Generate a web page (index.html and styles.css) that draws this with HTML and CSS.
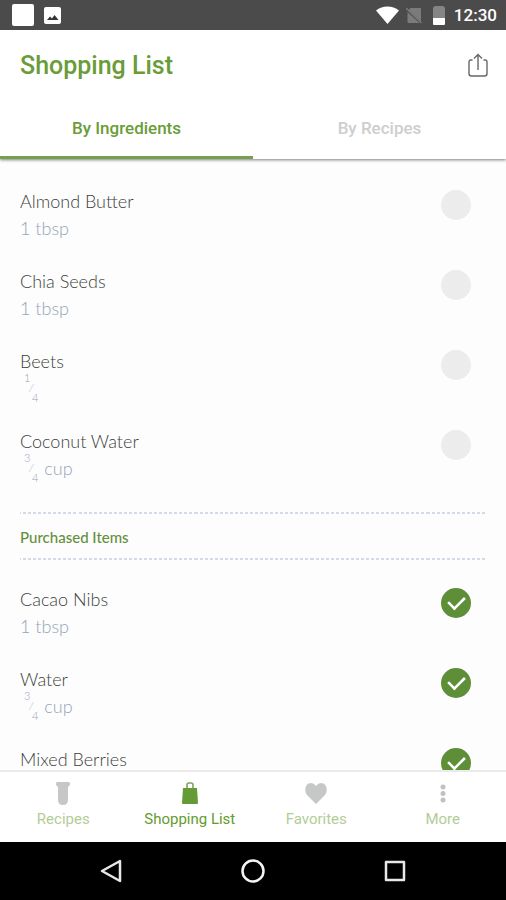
FILE: index.html
```html
<!DOCTYPE html>
<html lang="en">
<head>
<meta charset="utf-8">
<meta name="viewport" content="width=device-width, initial-scale=1">
<title>Shopping List</title>
<link rel="stylesheet" href="styles.css">
</head>
<body>
<div class="status">
  <svg class="status-app" width="22" height="22" viewBox="0 0 22 22" aria-hidden="true"><rect width="22" height="22" rx="2" fill="#fff"/></svg>
  <svg width="17" height="17" viewBox="0 0 17 17" aria-hidden="true"><rect width="17" height="17" rx="2" fill="#fff"/><path d="M3 13l3-3.500 2 2 2.500-3.500 4 5z" fill="#333"/></svg>
  <span class="spacer"></span>
  <svg width="23" height="18" viewBox="0 0 23 18" aria-hidden="true"><path d="M0 4.500C6.500-1 16.500-1 23 4.500L11.500 18z" fill="#fff"/></svg>
  <svg class="status-sim" width="16" height="17" viewBox="0 0 16 17" aria-hidden="true"><path d="M4.500 1H14q1 0 1 1v12.500L2.500 3zM1.500 5L13.500 16H2.500q-1 0-1-1z" fill="#7b7b7b"/><path d="M0 1l15.500 15" stroke="#7b7b7b" stroke-width="1.400"/></svg>
  <svg width="12" height="19" viewBox="0 0 12 19" aria-hidden="true"><path d="M3 0h6q3 0 3 3v9H0V3q0-3 3-3z" fill="#858585"/><path d="M0 12h12v6q0 1-1 1H1q-1 0-1-1z" fill="#fff"/></svg>
  <time class="clock">12:30</time>
</div>
<header class="header">
  <h1 class="title">Shopping List</h1>
  <button class="share" type="button" aria-label="Share">
    <svg width="20" height="24" viewBox="0 0 20 24" fill="none" stroke="#686868" stroke-width="1.400" aria-hidden="true"><path d="M4.500 7H3Q1 7 1 9v11.500q0 2.500 2.500 2.500h13q2.500 0 2.500-2.500V9q0-2-2-2h-1.500M10 17V1.500M6 5.500l4-4 4 4"/></svg>
  </button>
</header>
<nav class="tabs" aria-label="Group by">
  <button class="tab tab-active" type="button">By Ingredients</button>
  <button class="tab" type="button">By Recipes</button>
</nav>
<main class="content">
  <div class="items">
    <label class="item"><span class="text"><span class="name">Almond Butter</span><span class="qty">1 tbsp</span></span><input class="check" type="checkbox"></label>
    <label class="item"><span class="text"><span class="name">Chia Seeds</span><span class="qty">1 tbsp</span></span><input class="check" type="checkbox"></label>
    <label class="item"><span class="text"><span class="name">Beets</span><span class="qty"><span class="frac"><span>1</span><span>⁄</span><span>4</span></span></span></span><input class="check" type="checkbox"></label>
    <label class="item"><span class="text"><span class="name">Coconut Water</span><span class="qty"><span class="frac"><span>3</span><span>⁄</span><span>4</span></span>cup</span></span><input class="check" type="checkbox"></label>
  </div>
  <h2 class="purchased">Purchased Items</h2>
  <div class="items">
    <label class="item"><span class="text"><span class="name">Cacao Nibs</span><span class="qty">1 tbsp</span></span><input class="check" type="checkbox" checked></label>
    <label class="item"><span class="text"><span class="name">Water</span><span class="qty"><span class="frac"><span>3</span><span>⁄</span><span>4</span></span>cup</span></span><input class="check" type="checkbox" checked></label>
    <label class="item"><span class="text"><span class="name">Mixed Berries</span></span><input class="check" type="checkbox" checked></label>
  </div>
</main>
<nav class="bottom" aria-label="Main">
  <a class="link" href="#recipes"><svg width="24" height="24" viewBox="0 0 24 24" fill="#c6c8c7" aria-hidden="true"><path d="M6 0h12q1 0 1 2t-1 2l-1 1v13q0 5-5 5t-5-5V5L6 4Q5 4 5 2t1-2z"/></svg>Recipes</a>
  <a class="link link-active" href="#shopping"><svg width="24" height="24" viewBox="0 0 24 24" aria-hidden="true"><path d="M9 7V3q0-2 2-2h2q2 0 2 2v4" fill="none" stroke="#80a35b" stroke-width="1.600"/><path d="M5 6h14l1 15q0 1-1 1H5q-1 0-1-1z" fill="#649b37"/></svg>Shopping List</a>
  <a class="link" href="#favorites"><svg width="24" height="24" viewBox="0 0 24 24" fill="#c6c8c7" aria-hidden="true"><path d="M12 22L3.500 13.500C-.5 9.500 1 1 7 1q3 0 5 3 2-3 5-3c6 0 7.500 8.500 3.500 12.500z"/></svg>Favorites</a>
  <a class="link" href="#more"><svg width="24" height="24" viewBox="0 0 24 24" fill="#c0c2c1" aria-hidden="true"><circle cx="12" cy="5" r="2.500"/><circle cx="12" cy="11.500" r="2.500"/><circle cx="12" cy="18" r="2.500"/></svg>More</a>
</nav>
<div class="system">
  <button class="key" type="button" aria-label="Back"><svg width="24" height="24" viewBox="0 0 24 24" fill="none" stroke="#e8e8e8" stroke-width="2.500" stroke-linejoin="round" aria-hidden="true"><path d="M21 2v20L3 12z"/></svg></button>
  <button class="key" type="button" aria-label="Home"><svg width="24" height="24" viewBox="0 0 24 24" fill="none" stroke="#f4f4f4" stroke-width="2.500" aria-hidden="true"><circle cx="12" cy="12" r="10.500"/></svg></button>
  <button class="key" type="button" aria-label="Overview"><svg width="24" height="24" viewBox="0 0 24 24" fill="none" stroke="#e8e8e8" stroke-width="2.500" stroke-linejoin="round" aria-hidden="true"><path d="M3 3h18v18H3z"/></svg></button>
</div>
</body>
</html>
```
FILE: styles.css
```css
* { box-sizing: border-box; }
body {
  margin: 0;
  height: 100vh;
  display: flex;
  flex-direction: column;
  background: #fdfdfd;
  font-family: Roboto, "Liberation Sans", sans-serif;
}
button {
  border: 0;
  padding: 0;
  background: none;
  font: inherit;
  color: inherit;
}
svg { display: block; flex: none; }

.status {
  flex: none;
  display: flex;
  align-items: center;
  height: 30px;
  padding: 0 9px 0 12px;
  background: #4b4b4b;
  color: #fff;
}
.status-app { margin-right: 10px; }
.spacer { flex: 1; }
.status-sim { margin: 0 11px 0 7px; }
.clock { margin-left: 9px; font-size: 17px; font-weight: 500; }

.header {
  position: relative;
  z-index: 2;
  flex: none;
  display: flex;
  align-items: center;
  justify-content: space-between;
  height: 70px;
  padding: 0 18px 0 20px;
  background: #fff;
}
.title { margin: 0; font-size: 25px; font-weight: 500; color: #6a9c38; }

.tabs {
  flex: none;
  display: flex;
  height: 59px;
  background: #fff;
  box-shadow: 0 1px 3px rgba(0, 0, 0, .5);
  z-index: 1;
}
.tab {
  flex: 1;
  border-bottom: 3px solid transparent;
  font-size: 17px;
  font-weight: 500;
  color: #cdcecd;
}
.tab-active { color: #6a9c38; border-color: #76a04e; }

.content { flex: 1; min-height: 0; overflow: hidden; padding: 29px 20px 0; }
.item {
  display: flex;
  justify-content: space-between;
  height: 80px;
  padding-right: 15px;
}
.text { display: flex; flex-direction: column; font-family: Lato, "Liberation Sans", sans-serif; font-size: 18px; font-weight: 300; }
.name { line-height: 26px; color: #3c3f3c; }
.qty { display: flex; align-items: center; height: 27px; color: #94a4b8; }
.frac { display: flex; height: 32px; padding: 0 6px 0 4px; font-size: 11px; line-height: 12px; }
.frac :nth-child(2) { align-self: center; }
.frac :nth-child(3) { align-self: flex-end; }

.check {
  appearance: none;
  flex: none;
  display: grid;
  place-items: center;
  width: 30px;
  height: 30px;
  margin: 2px 0 0;
  border-radius: 50%;
  background: #ececec;
}
.check:checked { background: #5e8e38; }
.check:checked::before {
  content: "";
  width: 16px;
  height: 9px;
  margin-bottom: 4px;
  border: solid #fff;
  border-width: 0 0 3px 3px;
  rotate: -45deg;
  scale: .85;
}

.purchased {
  height: 48px;
  margin: 4px 0 26px;
  border: dashed #d3dbe6;
  border-width: 2px 0;
  border-image: repeating-linear-gradient(90deg, #d3dbe6 0 3px, transparent 3px 5px) 2;
  font-family: Lato, "Liberation Sans", sans-serif;
  font-size: 15px;
  font-weight: 500;
  line-height: 46px;
  color: #658f3c;
}

.bottom {
  flex: none;
  display: flex;
  height: 72px;
  border-top: 2px solid #ebebeb;
  background: #fff;
}
.link {
  flex: 1;
  display: flex;
  flex-direction: column;
  align-items: center;
  padding-top: 10px;
  gap: 3px;
  font-size: 15px;
  line-height: 20px;
  color: #b4cc99;
  text-decoration: none;
}
.link-active { color: #649b2e; }

.system {
  flex: none;
  display: flex;
  justify-content: center;
  gap: 118px;
  height: 58px;
  background: #000;
}
```
